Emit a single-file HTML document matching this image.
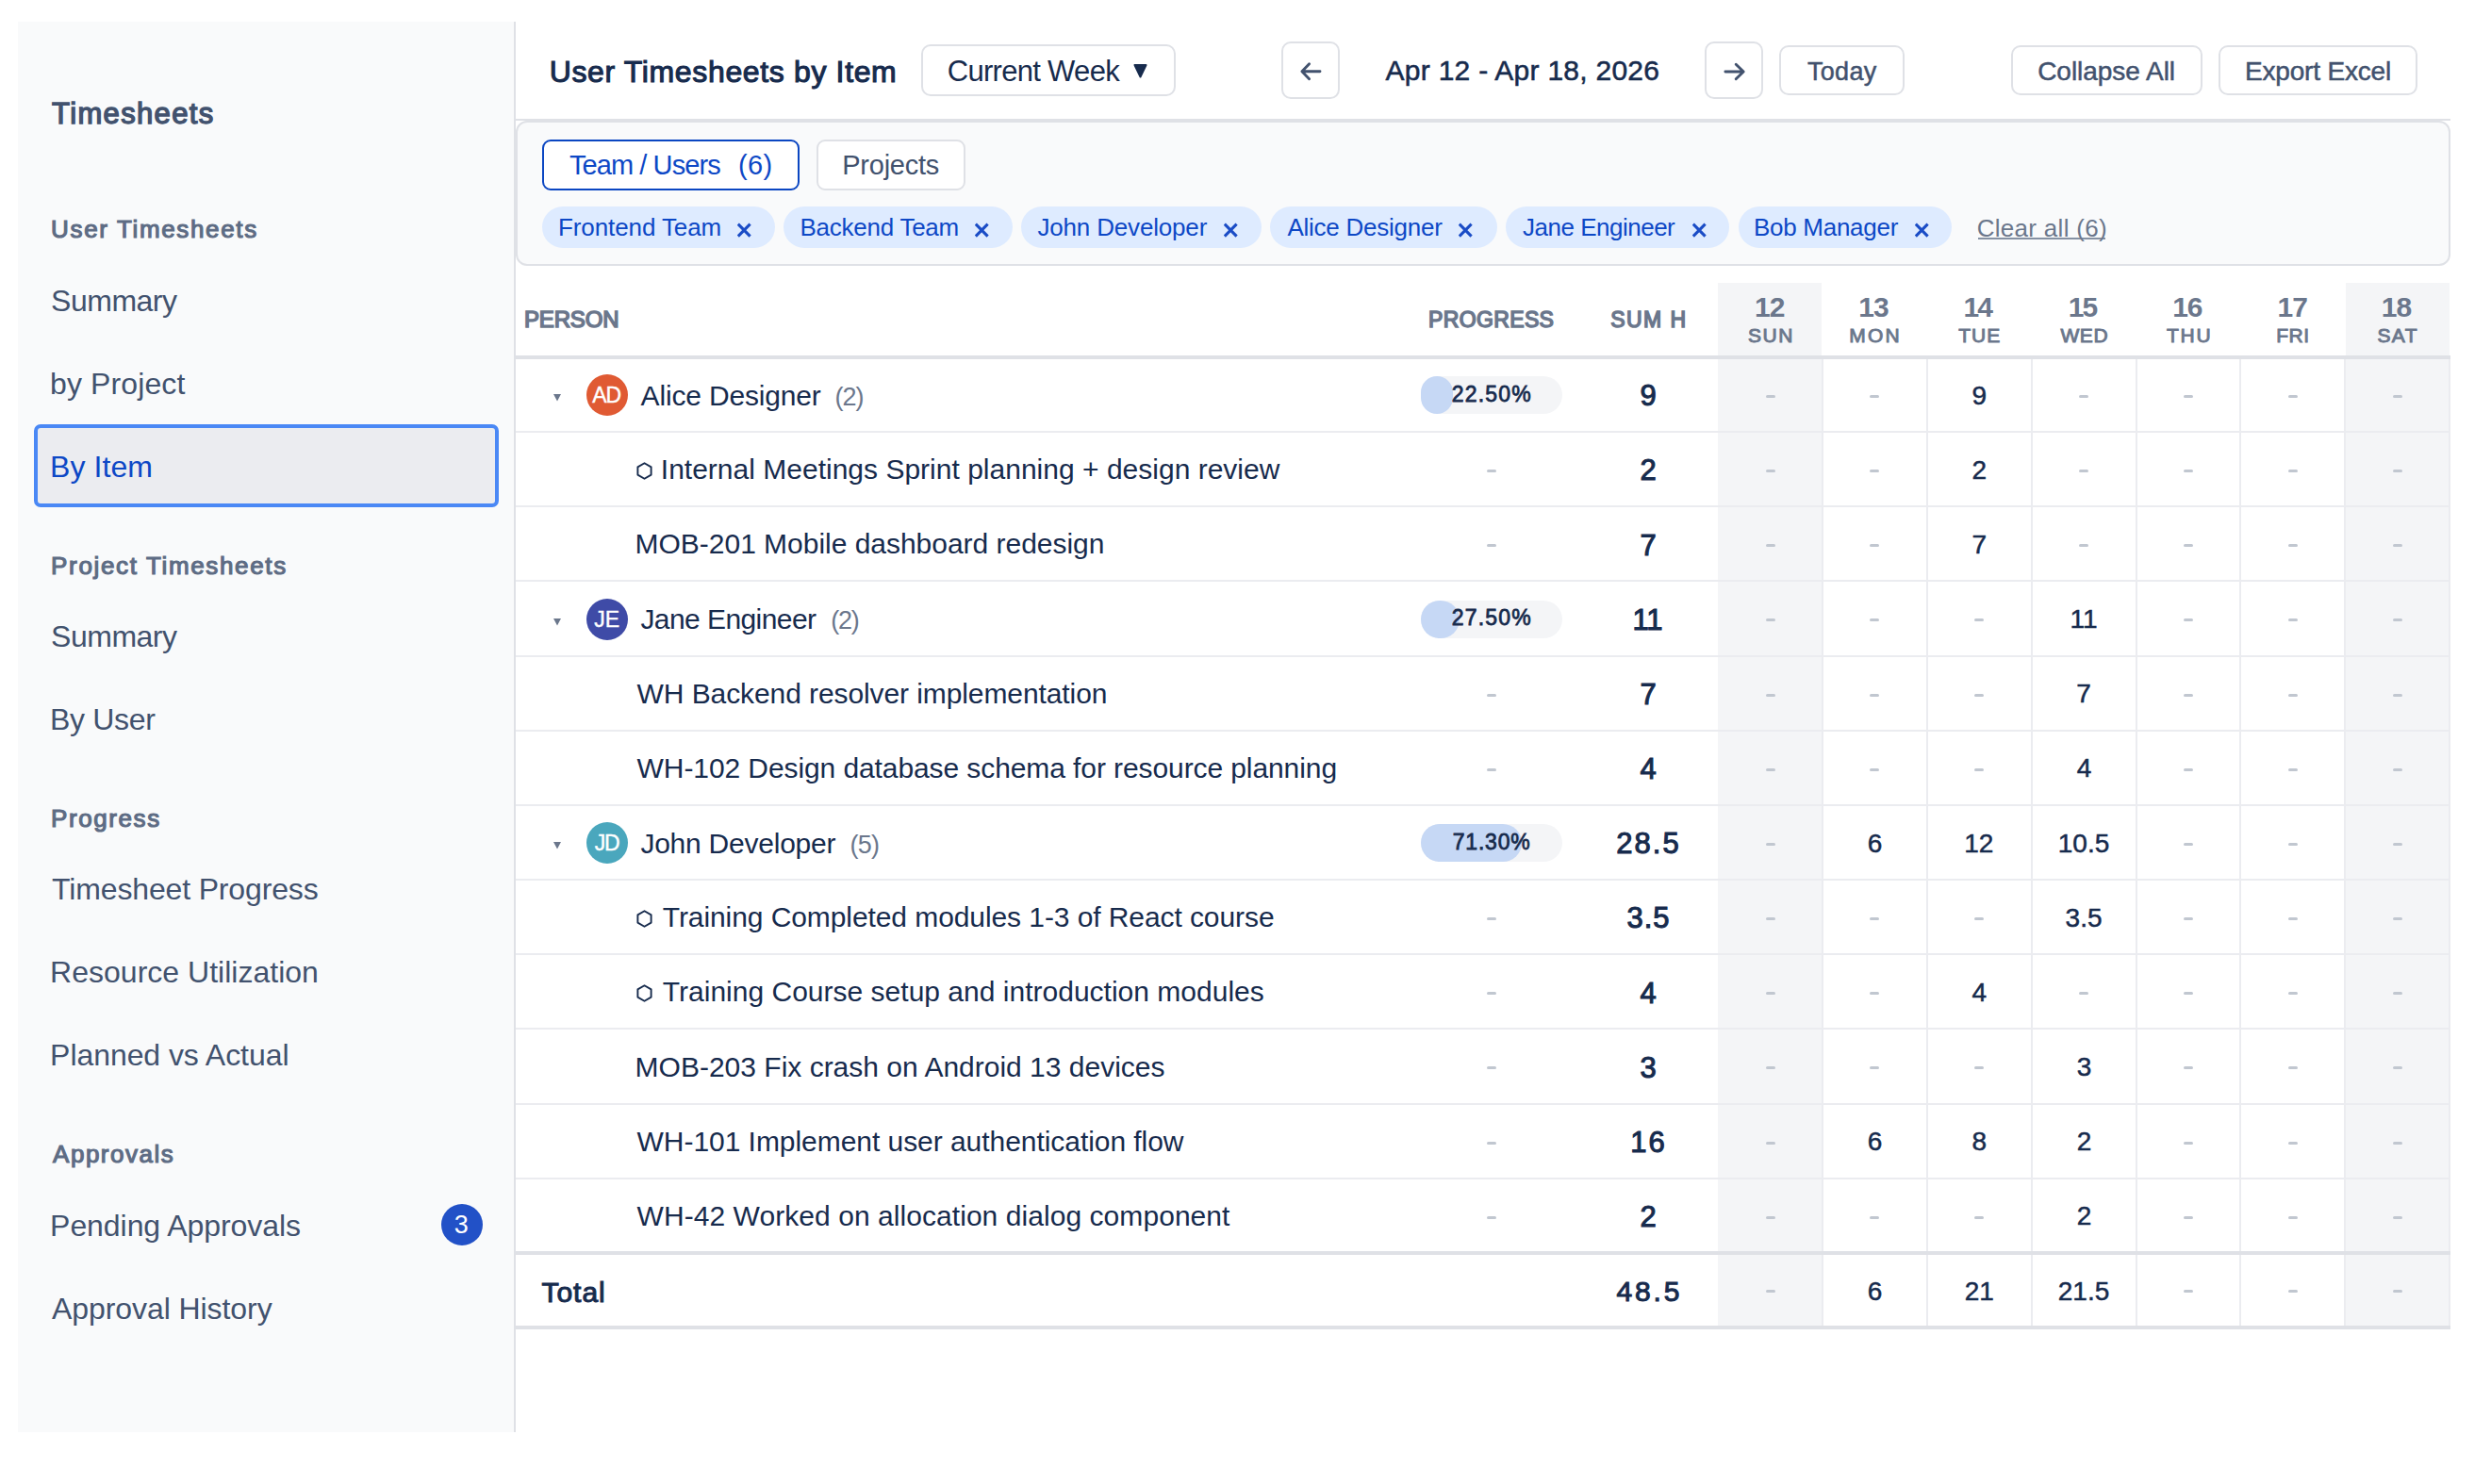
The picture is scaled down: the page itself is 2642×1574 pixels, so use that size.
<!DOCTYPE html><html><head><meta charset="utf-8"><style>html,body{margin:0;padding:0;background:#fff;width:2642px;height:1574px;overflow:hidden;position:relative;font-family:"Liberation Sans",sans-serif}</style></head><body>
<div style="position:absolute;left:19px;top:23px;width:526px;height:1496px;background:#f9fafb"></div>
<div style="position:absolute;left:545px;top:23px;width:2px;height:1496px;background:#dfe1e6"></div>
<div style="position:absolute;left:36px;top:450px;width:493px;height:88px;box-sizing:border-box;border:4px solid #4a88f5;border-radius:7px;background:#ebecf0"></div>
<div style="position:absolute;left:468px;top:1277px;width:44px;height:44px;border-radius:50%;background:#2251c7"></div>
<div style="position:absolute;left:547px;top:126px;width:2052px;height:2px;background:#dfe1e6"></div>
<div style="position:absolute;left:977px;top:47px;width:270px;height:55px;box-sizing:border-box;border:2px solid #dfe1e6;border-radius:10px;background:#fff"></div>
<svg style="position:absolute;left:1202px;top:68px" width="15" height="15" viewBox="0 0 15 15"><path d="M1.5 1 L13.5 1 L7.5 13.5 Z" fill="#172b4d" stroke="#172b4d" stroke-width="2" stroke-linejoin="round"/></svg>
<div style="position:absolute;left:1359px;top:44px;width:62px;height:61px;box-sizing:border-box;border:2px solid #dfe1e6;border-radius:10px;background:#fff"></div>
<svg style="position:absolute;left:1370px;top:55px" width="40" height="40" viewBox="0 0 40 40"><path d="M30 20.8 H11.5 M18.6 12.8 L10.9 20.8 L18.6 28.7" fill="none" stroke="#42526e" stroke-width="2.9" stroke-linecap="round" stroke-linejoin="round"/></svg>
<div style="position:absolute;left:1808px;top:44px;width:62px;height:61px;box-sizing:border-box;border:2px solid #dfe1e6;border-radius:10px;background:#fff"></div>
<svg style="position:absolute;left:1819px;top:55px" width="40" height="40" viewBox="0 0 40 40"><path d="M10.9 21 H29.6 M22.2 13.2 L30.2 21 L22.2 28.8" fill="none" stroke="#42526e" stroke-width="2.9" stroke-linecap="round" stroke-linejoin="round"/></svg>
<div style="position:absolute;left:1887px;top:48px;width:133px;height:53px;box-sizing:border-box;border:2px solid #dfe1e6;border-radius:10px;background:#fff"></div>
<div style="position:absolute;left:2133px;top:48px;width:203px;height:53px;box-sizing:border-box;border:2px solid #dfe1e6;border-radius:10px;background:#fff"></div>
<div style="position:absolute;left:2353px;top:48px;width:211px;height:53px;box-sizing:border-box;border:2px solid #dfe1e6;border-radius:10px;background:#fff"></div>
<div style="position:absolute;left:547px;top:128px;width:2052px;height:154px;box-sizing:border-box;border:2px solid #dfe1e6;border-radius:12px;background:#f9fafb"></div>
<div style="position:absolute;left:575px;top:148px;width:273px;height:54px;box-sizing:border-box;border:2px solid #0b46c2;border-radius:9px;background:#fff"></div>
<div style="position:absolute;left:866px;top:148px;width:158px;height:54px;box-sizing:border-box;border:2px solid #dfe1e6;border-radius:9px;background:#fff"></div>
<div style="position:absolute;left:575px;top:219px;width:247px;height:44px;border-radius:22px;background:#deebff"></div>
<svg style="position:absolute;left:782.2px;top:236px" width="16" height="17" viewBox="0 0 16 17"><path d="M0.8 1.6 L13.6 14.6 M13.6 1.6 L0.8 14.6" stroke="#1a4cc6" stroke-width="3.1" stroke-linecap="butt"/></svg>
<div style="position:absolute;left:831px;top:219px;width:243px;height:44px;border-radius:22px;background:#deebff"></div>
<svg style="position:absolute;left:1033.7px;top:236px" width="16" height="17" viewBox="0 0 16 17"><path d="M0.8 1.6 L13.6 14.6 M13.6 1.6 L0.8 14.6" stroke="#1a4cc6" stroke-width="3.1" stroke-linecap="butt"/></svg>
<div style="position:absolute;left:1083px;top:219px;width:255px;height:44px;border-radius:22px;background:#deebff"></div>
<svg style="position:absolute;left:1297.8px;top:236px" width="16" height="17" viewBox="0 0 16 17"><path d="M0.8 1.6 L13.6 14.6 M13.6 1.6 L0.8 14.6" stroke="#1a4cc6" stroke-width="3.1" stroke-linecap="butt"/></svg>
<div style="position:absolute;left:1347px;top:219px;width:241px;height:44px;border-radius:22px;background:#deebff"></div>
<svg style="position:absolute;left:1547.3px;top:236px" width="16" height="17" viewBox="0 0 16 17"><path d="M0.8 1.6 L13.6 14.6 M13.6 1.6 L0.8 14.6" stroke="#1a4cc6" stroke-width="3.1" stroke-linecap="butt"/></svg>
<div style="position:absolute;left:1597px;top:219px;width:237px;height:44px;border-radius:22px;background:#deebff"></div>
<svg style="position:absolute;left:1794.5px;top:236px" width="16" height="17" viewBox="0 0 16 17"><path d="M0.8 1.6 L13.6 14.6 M13.6 1.6 L0.8 14.6" stroke="#1a4cc6" stroke-width="3.1" stroke-linecap="butt"/></svg>
<div style="position:absolute;left:1844px;top:219px;width:226px;height:44px;border-radius:22px;background:#deebff"></div>
<svg style="position:absolute;left:2031.0px;top:236px" width="16" height="17" viewBox="0 0 16 17"><path d="M0.8 1.6 L13.6 14.6 M13.6 1.6 L0.8 14.6" stroke="#1a4cc6" stroke-width="3.1" stroke-linecap="butt"/></svg>
<div style="position:absolute;left:2098px;top:252px;width:135px;height:2px;background:#8591a3"></div>
<div style="position:absolute;left:1822px;top:300px;width:110px;height:1110px;background:#f4f5f7"></div>
<div style="position:absolute;left:2488px;top:300px;width:110px;height:1110px;background:#f4f5f7"></div>
<div style="position:absolute;left:547px;top:377px;width:2052px;height:4px;background:#dfe1e6"></div>
<div style="position:absolute;left:547px;top:457px;width:2052px;height:2px;background:#ebecf0"></div>
<svg style="position:absolute;left:587px;top:418.0px" width="8" height="8" viewBox="0 0 8 8"><path d="M0 0 H8 L4 7.5 Z" fill="#6b778c"/></svg>
<div style="position:absolute;left:622px;top:397px;width:44px;height:44px;border-radius:50%;background:#e05a33"></div>
<div style="position:absolute;left:1507px;top:399px;width:150px;height:40px;border-radius:20px;background:#f4f5f7;overflow:hidden"></div>
<div style="position:absolute;left:1507px;top:399px;width:34px;height:40px;border-radius:20px;background:#c6d8f5"></div>
<div style="position:absolute;left:1872.5px;top:418.9px;width:10px;height:3px;background:#c1c7d0;border-radius:1.5px"></div>
<div style="position:absolute;left:1983.4px;top:418.9px;width:10px;height:3px;background:#c1c7d0;border-radius:1.5px"></div>
<div style="position:absolute;left:2205.1px;top:418.9px;width:10px;height:3px;background:#c1c7d0;border-radius:1.5px"></div>
<div style="position:absolute;left:2316.0px;top:418.9px;width:10px;height:3px;background:#c1c7d0;border-radius:1.5px"></div>
<div style="position:absolute;left:2426.9px;top:418.9px;width:10px;height:3px;background:#c1c7d0;border-radius:1.5px"></div>
<div style="position:absolute;left:2537.8px;top:418.9px;width:10px;height:3px;background:#c1c7d0;border-radius:1.5px"></div>
<div style="position:absolute;left:547px;top:536px;width:2052px;height:2px;background:#ebecf0"></div>
<svg style="position:absolute;left:675px;top:490.2px" width="18" height="20" viewBox="0 0 18 20"><path d="M8.5 1.3 L15.6 5.4 L15.6 13.6 L8.5 17.7 L1.4 13.6 L1.4 5.4 Z" fill="none" stroke="#172b4d" stroke-width="1.9" stroke-linejoin="round"/></svg>
<div style="position:absolute;left:1577px;top:498.1px;width:10px;height:3px;background:#c1c7d0;border-radius:1.5px"></div>
<div style="position:absolute;left:1872.5px;top:498.1px;width:10px;height:3px;background:#c1c7d0;border-radius:1.5px"></div>
<div style="position:absolute;left:1983.4px;top:498.1px;width:10px;height:3px;background:#c1c7d0;border-radius:1.5px"></div>
<div style="position:absolute;left:2205.1px;top:498.1px;width:10px;height:3px;background:#c1c7d0;border-radius:1.5px"></div>
<div style="position:absolute;left:2316.0px;top:498.1px;width:10px;height:3px;background:#c1c7d0;border-radius:1.5px"></div>
<div style="position:absolute;left:2426.9px;top:498.1px;width:10px;height:3px;background:#c1c7d0;border-radius:1.5px"></div>
<div style="position:absolute;left:2537.8px;top:498.1px;width:10px;height:3px;background:#c1c7d0;border-radius:1.5px"></div>
<div style="position:absolute;left:547px;top:615px;width:2052px;height:2px;background:#ebecf0"></div>
<div style="position:absolute;left:1577px;top:577.2px;width:10px;height:3px;background:#c1c7d0;border-radius:1.5px"></div>
<div style="position:absolute;left:1872.5px;top:577.2px;width:10px;height:3px;background:#c1c7d0;border-radius:1.5px"></div>
<div style="position:absolute;left:1983.4px;top:577.2px;width:10px;height:3px;background:#c1c7d0;border-radius:1.5px"></div>
<div style="position:absolute;left:2205.1px;top:577.2px;width:10px;height:3px;background:#c1c7d0;border-radius:1.5px"></div>
<div style="position:absolute;left:2316.0px;top:577.2px;width:10px;height:3px;background:#c1c7d0;border-radius:1.5px"></div>
<div style="position:absolute;left:2426.9px;top:577.2px;width:10px;height:3px;background:#c1c7d0;border-radius:1.5px"></div>
<div style="position:absolute;left:2537.8px;top:577.2px;width:10px;height:3px;background:#c1c7d0;border-radius:1.5px"></div>
<div style="position:absolute;left:547px;top:695px;width:2052px;height:2px;background:#ebecf0"></div>
<svg style="position:absolute;left:587px;top:655.5px" width="8" height="8" viewBox="0 0 8 8"><path d="M0 0 H8 L4 7.5 Z" fill="#6b778c"/></svg>
<div style="position:absolute;left:622px;top:635px;width:44px;height:44px;border-radius:50%;background:#3f4ba7"></div>
<div style="position:absolute;left:1507px;top:637px;width:150px;height:40px;border-radius:20px;background:#f4f5f7;overflow:hidden"></div>
<div style="position:absolute;left:1507px;top:637px;width:41px;height:40px;border-radius:20px;background:#c6d8f5"></div>
<div style="position:absolute;left:1872.5px;top:656.4px;width:10px;height:3px;background:#c1c7d0;border-radius:1.5px"></div>
<div style="position:absolute;left:1983.4px;top:656.4px;width:10px;height:3px;background:#c1c7d0;border-radius:1.5px"></div>
<div style="position:absolute;left:2094.2px;top:656.4px;width:10px;height:3px;background:#c1c7d0;border-radius:1.5px"></div>
<div style="position:absolute;left:2316.0px;top:656.4px;width:10px;height:3px;background:#c1c7d0;border-radius:1.5px"></div>
<div style="position:absolute;left:2426.9px;top:656.4px;width:10px;height:3px;background:#c1c7d0;border-radius:1.5px"></div>
<div style="position:absolute;left:2537.8px;top:656.4px;width:10px;height:3px;background:#c1c7d0;border-radius:1.5px"></div>
<div style="position:absolute;left:547px;top:774px;width:2052px;height:2px;background:#ebecf0"></div>
<div style="position:absolute;left:1577px;top:735.6px;width:10px;height:3px;background:#c1c7d0;border-radius:1.5px"></div>
<div style="position:absolute;left:1872.5px;top:735.6px;width:10px;height:3px;background:#c1c7d0;border-radius:1.5px"></div>
<div style="position:absolute;left:1983.4px;top:735.6px;width:10px;height:3px;background:#c1c7d0;border-radius:1.5px"></div>
<div style="position:absolute;left:2094.2px;top:735.6px;width:10px;height:3px;background:#c1c7d0;border-radius:1.5px"></div>
<div style="position:absolute;left:2316.0px;top:735.6px;width:10px;height:3px;background:#c1c7d0;border-radius:1.5px"></div>
<div style="position:absolute;left:2426.9px;top:735.6px;width:10px;height:3px;background:#c1c7d0;border-radius:1.5px"></div>
<div style="position:absolute;left:2537.8px;top:735.6px;width:10px;height:3px;background:#c1c7d0;border-radius:1.5px"></div>
<div style="position:absolute;left:547px;top:853px;width:2052px;height:2px;background:#ebecf0"></div>
<div style="position:absolute;left:1577px;top:814.8px;width:10px;height:3px;background:#c1c7d0;border-radius:1.5px"></div>
<div style="position:absolute;left:1872.5px;top:814.8px;width:10px;height:3px;background:#c1c7d0;border-radius:1.5px"></div>
<div style="position:absolute;left:1983.4px;top:814.8px;width:10px;height:3px;background:#c1c7d0;border-radius:1.5px"></div>
<div style="position:absolute;left:2094.2px;top:814.8px;width:10px;height:3px;background:#c1c7d0;border-radius:1.5px"></div>
<div style="position:absolute;left:2316.0px;top:814.8px;width:10px;height:3px;background:#c1c7d0;border-radius:1.5px"></div>
<div style="position:absolute;left:2426.9px;top:814.8px;width:10px;height:3px;background:#c1c7d0;border-radius:1.5px"></div>
<div style="position:absolute;left:2537.8px;top:814.8px;width:10px;height:3px;background:#c1c7d0;border-radius:1.5px"></div>
<div style="position:absolute;left:547px;top:932px;width:2052px;height:2px;background:#ebecf0"></div>
<svg style="position:absolute;left:587px;top:893.0px" width="8" height="8" viewBox="0 0 8 8"><path d="M0 0 H8 L4 7.5 Z" fill="#6b778c"/></svg>
<div style="position:absolute;left:622px;top:872px;width:44px;height:44px;border-radius:50%;background:#4aa7bd"></div>
<div style="position:absolute;left:1507px;top:874px;width:150px;height:40px;border-radius:20px;background:#f4f5f7;overflow:hidden"></div>
<div style="position:absolute;left:1507px;top:874px;width:107px;height:40px;border-radius:20px;background:#c6d8f5"></div>
<div style="position:absolute;left:1872.5px;top:893.9px;width:10px;height:3px;background:#c1c7d0;border-radius:1.5px"></div>
<div style="position:absolute;left:2316.0px;top:893.9px;width:10px;height:3px;background:#c1c7d0;border-radius:1.5px"></div>
<div style="position:absolute;left:2426.9px;top:893.9px;width:10px;height:3px;background:#c1c7d0;border-radius:1.5px"></div>
<div style="position:absolute;left:2537.8px;top:893.9px;width:10px;height:3px;background:#c1c7d0;border-radius:1.5px"></div>
<div style="position:absolute;left:547px;top:1011px;width:2052px;height:2px;background:#ebecf0"></div>
<svg style="position:absolute;left:675px;top:965.2px" width="18" height="20" viewBox="0 0 18 20"><path d="M8.5 1.3 L15.6 5.4 L15.6 13.6 L8.5 17.7 L1.4 13.6 L1.4 5.4 Z" fill="none" stroke="#172b4d" stroke-width="1.9" stroke-linejoin="round"/></svg>
<div style="position:absolute;left:1577px;top:973.1px;width:10px;height:3px;background:#c1c7d0;border-radius:1.5px"></div>
<div style="position:absolute;left:1872.5px;top:973.1px;width:10px;height:3px;background:#c1c7d0;border-radius:1.5px"></div>
<div style="position:absolute;left:1983.4px;top:973.1px;width:10px;height:3px;background:#c1c7d0;border-radius:1.5px"></div>
<div style="position:absolute;left:2094.2px;top:973.1px;width:10px;height:3px;background:#c1c7d0;border-radius:1.5px"></div>
<div style="position:absolute;left:2316.0px;top:973.1px;width:10px;height:3px;background:#c1c7d0;border-radius:1.5px"></div>
<div style="position:absolute;left:2426.9px;top:973.1px;width:10px;height:3px;background:#c1c7d0;border-radius:1.5px"></div>
<div style="position:absolute;left:2537.8px;top:973.1px;width:10px;height:3px;background:#c1c7d0;border-radius:1.5px"></div>
<div style="position:absolute;left:547px;top:1090px;width:2052px;height:2px;background:#ebecf0"></div>
<svg style="position:absolute;left:675px;top:1044.4px" width="18" height="20" viewBox="0 0 18 20"><path d="M8.5 1.3 L15.6 5.4 L15.6 13.6 L8.5 17.7 L1.4 13.6 L1.4 5.4 Z" fill="none" stroke="#172b4d" stroke-width="1.9" stroke-linejoin="round"/></svg>
<div style="position:absolute;left:1577px;top:1052.3px;width:10px;height:3px;background:#c1c7d0;border-radius:1.5px"></div>
<div style="position:absolute;left:1872.5px;top:1052.3px;width:10px;height:3px;background:#c1c7d0;border-radius:1.5px"></div>
<div style="position:absolute;left:1983.4px;top:1052.3px;width:10px;height:3px;background:#c1c7d0;border-radius:1.5px"></div>
<div style="position:absolute;left:2205.1px;top:1052.3px;width:10px;height:3px;background:#c1c7d0;border-radius:1.5px"></div>
<div style="position:absolute;left:2316.0px;top:1052.3px;width:10px;height:3px;background:#c1c7d0;border-radius:1.5px"></div>
<div style="position:absolute;left:2426.9px;top:1052.3px;width:10px;height:3px;background:#c1c7d0;border-radius:1.5px"></div>
<div style="position:absolute;left:2537.8px;top:1052.3px;width:10px;height:3px;background:#c1c7d0;border-radius:1.5px"></div>
<div style="position:absolute;left:547px;top:1170px;width:2052px;height:2px;background:#ebecf0"></div>
<div style="position:absolute;left:1577px;top:1131.4px;width:10px;height:3px;background:#c1c7d0;border-radius:1.5px"></div>
<div style="position:absolute;left:1872.5px;top:1131.4px;width:10px;height:3px;background:#c1c7d0;border-radius:1.5px"></div>
<div style="position:absolute;left:1983.4px;top:1131.4px;width:10px;height:3px;background:#c1c7d0;border-radius:1.5px"></div>
<div style="position:absolute;left:2094.2px;top:1131.4px;width:10px;height:3px;background:#c1c7d0;border-radius:1.5px"></div>
<div style="position:absolute;left:2316.0px;top:1131.4px;width:10px;height:3px;background:#c1c7d0;border-radius:1.5px"></div>
<div style="position:absolute;left:2426.9px;top:1131.4px;width:10px;height:3px;background:#c1c7d0;border-radius:1.5px"></div>
<div style="position:absolute;left:2537.8px;top:1131.4px;width:10px;height:3px;background:#c1c7d0;border-radius:1.5px"></div>
<div style="position:absolute;left:547px;top:1249px;width:2052px;height:2px;background:#ebecf0"></div>
<div style="position:absolute;left:1577px;top:1210.6px;width:10px;height:3px;background:#c1c7d0;border-radius:1.5px"></div>
<div style="position:absolute;left:1872.5px;top:1210.6px;width:10px;height:3px;background:#c1c7d0;border-radius:1.5px"></div>
<div style="position:absolute;left:2316.0px;top:1210.6px;width:10px;height:3px;background:#c1c7d0;border-radius:1.5px"></div>
<div style="position:absolute;left:2426.9px;top:1210.6px;width:10px;height:3px;background:#c1c7d0;border-radius:1.5px"></div>
<div style="position:absolute;left:2537.8px;top:1210.6px;width:10px;height:3px;background:#c1c7d0;border-radius:1.5px"></div>
<div style="position:absolute;left:1577px;top:1289.8px;width:10px;height:3px;background:#c1c7d0;border-radius:1.5px"></div>
<div style="position:absolute;left:1872.5px;top:1289.8px;width:10px;height:3px;background:#c1c7d0;border-radius:1.5px"></div>
<div style="position:absolute;left:1983.4px;top:1289.8px;width:10px;height:3px;background:#c1c7d0;border-radius:1.5px"></div>
<div style="position:absolute;left:2094.2px;top:1289.8px;width:10px;height:3px;background:#c1c7d0;border-radius:1.5px"></div>
<div style="position:absolute;left:2316.0px;top:1289.8px;width:10px;height:3px;background:#c1c7d0;border-radius:1.5px"></div>
<div style="position:absolute;left:2426.9px;top:1289.8px;width:10px;height:3px;background:#c1c7d0;border-radius:1.5px"></div>
<div style="position:absolute;left:2537.8px;top:1289.8px;width:10px;height:3px;background:#c1c7d0;border-radius:1.5px"></div>
<div style="position:absolute;left:1932px;top:381px;width:2px;height:1025px;background:#ebecf0"></div>
<div style="position:absolute;left:2043px;top:381px;width:2px;height:1025px;background:#ebecf0"></div>
<div style="position:absolute;left:2154px;top:381px;width:2px;height:1025px;background:#ebecf0"></div>
<div style="position:absolute;left:2265px;top:381px;width:2px;height:1025px;background:#ebecf0"></div>
<div style="position:absolute;left:2375px;top:381px;width:2px;height:1025px;background:#ebecf0"></div>
<div style="position:absolute;left:2486px;top:381px;width:2px;height:1025px;background:#ebecf0"></div>
<div style="position:absolute;left:2597px;top:381px;width:2px;height:1025px;background:#ebecf0"></div>
<div style="position:absolute;left:547px;top:1327px;width:2052px;height:4px;background:#dfe1e6"></div>
<div style="position:absolute;left:547px;top:1406px;width:2052px;height:4px;background:#dfe1e6"></div>
<div style="position:absolute;left:1872.5px;top:1368.3px;width:10px;height:3px;background:#c1c7d0;border-radius:1.5px"></div>
<div style="position:absolute;left:2316.0px;top:1368.3px;width:10px;height:3px;background:#c1c7d0;border-radius:1.5px"></div>
<div style="position:absolute;left:2426.9px;top:1368.3px;width:10px;height:3px;background:#c1c7d0;border-radius:1.5px"></div>
<div style="position:absolute;left:2537.8px;top:1368.3px;width:10px;height:3px;background:#c1c7d0;border-radius:1.5px"></div>
<div id="sb_title" style="position:absolute;left:55.10px;top:105px;font:normal 31px/31px 'Liberation Sans';letter-spacing:1.333px;color:#42526e;-webkit-text-stroke:1.40px #42526e;white-space:pre">Timesheets</div>
<div id="sb0" style="position:absolute;left:54.10px;top:230px;font:normal 26px/26px 'Liberation Sans';letter-spacing:1.643px;color:#5e6c84;-webkit-text-stroke:1.17px #5e6c84;white-space:pre">User Timesheets</div>
<div id="sb1" style="position:absolute;left:54.10px;top:303px;font:normal 32px/32px 'Liberation Sans';letter-spacing:-0.500px;color:#42526e;white-space:pre">Summary</div>
<div id="sb2" style="position:absolute;left:53.10px;top:391px;font:normal 32px/32px 'Liberation Sans';letter-spacing:0.111px;color:#42526e;white-space:pre">by Project</div>
<div id="sb3" style="position:absolute;left:53.10px;top:479px;font:normal 32px/32px 'Liberation Sans';letter-spacing:0.067px;color:#0d48c6;white-space:pre">By Item</div>
<div id="sb4" style="position:absolute;left:54.10px;top:587px;font:normal 26px/26px 'Liberation Sans';letter-spacing:1.647px;color:#5e6c84;-webkit-text-stroke:1.17px #5e6c84;white-space:pre">Project Timesheets</div>
<div id="sb5" style="position:absolute;left:54.10px;top:659px;font:normal 32px/32px 'Liberation Sans';letter-spacing:-0.500px;color:#42526e;white-space:pre">Summary</div>
<div id="sb6" style="position:absolute;left:53.10px;top:747px;font:normal 32px/32px 'Liberation Sans';letter-spacing:-0.333px;color:#42526e;white-space:pre">By User</div>
<div id="sb7" style="position:absolute;left:54.10px;top:855px;font:normal 26px/26px 'Liberation Sans';letter-spacing:1.571px;color:#5e6c84;-webkit-text-stroke:1.17px #5e6c84;white-space:pre">Progress</div>
<div id="sb8" style="position:absolute;left:55.10px;top:927px;font:normal 32px/32px 'Liberation Sans';letter-spacing:-0.153px;color:#42526e;white-space:pre">Timesheet Progress</div>
<div id="sb9" style="position:absolute;left:53.10px;top:1015px;font:normal 32px/32px 'Liberation Sans';letter-spacing:0.011px;color:#42526e;white-space:pre">Resource Utilization</div>
<div id="sb10" style="position:absolute;left:53.10px;top:1103px;font:normal 32px/32px 'Liberation Sans';letter-spacing:-0.062px;color:#42526e;white-space:pre">Planned vs Actual</div>
<div id="sb11" style="position:absolute;left:56.10px;top:1211px;font:normal 26px/26px 'Liberation Sans';letter-spacing:1.500px;color:#5e6c84;-webkit-text-stroke:1.17px #5e6c84;white-space:pre">Approvals</div>
<div id="sb12" style="position:absolute;left:53.10px;top:1284px;font:normal 32px/32px 'Liberation Sans';letter-spacing:-0.062px;color:#42526e;white-space:pre">Pending Approvals</div>
<div id="sb13" style="position:absolute;left:55.10px;top:1372px;font:normal 32px/32px 'Liberation Sans';letter-spacing:-0.080px;color:#42526e;white-space:pre">Approval History</div>
<div id="badge" style="position:absolute;left:189.20px;top:1286px;width:600px;text-align:center;font:normal 27px/27px 'Liberation Sans';letter-spacing:0.000px;color:#ffffff;white-space:pre"><span style="margin-right:-0.000px">3</span></div>
<div id="title" style="position:absolute;left:582.70px;top:60px;font:normal 32px/32px 'Liberation Sans';letter-spacing:0.645px;color:#172b4d;-webkit-text-stroke:1.09px #172b4d;white-space:pre">User Timesheets by Item</div>
<div id="cw" style="position:absolute;left:1004.80px;top:60px;font:normal 31px/31px 'Liberation Sans';letter-spacing:-0.709px;color:#172b4d;white-space:pre">Current Week</div>
<div id="date" style="position:absolute;left:1469.60px;top:60px;font:normal 30px/30px 'Liberation Sans';letter-spacing:0.260px;color:#172b4d;-webkit-text-stroke:0.54px #172b4d;white-space:pre">Apr 12 - Apr 18, 2026</div>
<div id="today" style="position:absolute;left:1917.00px;top:63px;font:normal 27px/27px 'Liberation Sans';letter-spacing:0.300px;color:#42526e;-webkit-text-stroke:0.49px #42526e;white-space:pre">Today</div>
<div id="collapse" style="position:absolute;left:2161.20px;top:62px;font:normal 28px/28px 'Liberation Sans';letter-spacing:-0.036px;color:#42526e;-webkit-text-stroke:0.50px #42526e;white-space:pre">Collapse All</div>
<div id="export" style="position:absolute;left:2381.00px;top:62px;font:normal 28px/28px 'Liberation Sans';letter-spacing:-0.182px;color:#42526e;-webkit-text-stroke:0.50px #42526e;white-space:pre">Export Excel</div>
<div id="tab1" style="position:absolute;left:603.90px;top:161px;font:normal 29px/29px 'Liberation Sans';letter-spacing:-0.909px;color:#0d48c6;white-space:pre">Team / Users</div>
<div id="tab1b" style="position:absolute;left:783.00px;top:161px;font:normal 29px/29px 'Liberation Sans';letter-spacing:0.400px;color:#0d48c6;white-space:pre">(6)</div>
<div id="tab2" style="position:absolute;left:893.20px;top:161px;font:normal 29px/29px 'Liberation Sans';letter-spacing:-0.229px;color:#42526e;white-space:pre">Projects</div>
<div id="chip0" style="position:absolute;left:592.00px;top:228px;font:normal 26px/26px 'Liberation Sans';letter-spacing:-0.100px;color:#0d48c6;white-space:pre">Frontend Team</div>
<div id="chip1" style="position:absolute;left:848.50px;top:228px;font:normal 26px/26px 'Liberation Sans';letter-spacing:-0.255px;color:#0d48c6;white-space:pre">Backend Team</div>
<div id="chip2" style="position:absolute;left:1100.40px;top:228px;font:normal 26px/26px 'Liberation Sans';letter-spacing:-0.169px;color:#0d48c6;white-space:pre">John Developer</div>
<div id="chip3" style="position:absolute;left:1365.40px;top:228px;font:normal 26px/26px 'Liberation Sans';letter-spacing:-0.246px;color:#0d48c6;white-space:pre">Alice Designer</div>
<div id="chip4" style="position:absolute;left:1615.10px;top:228px;font:normal 26px/26px 'Liberation Sans';letter-spacing:-0.500px;color:#0d48c6;white-space:pre">Jane Engineer</div>
<div id="chip5" style="position:absolute;left:1860.00px;top:228px;font:normal 26px/26px 'Liberation Sans';letter-spacing:-0.280px;color:#0d48c6;white-space:pre">Bob Manager</div>
<div id="clear" style="position:absolute;left:2096.70px;top:229px;font:normal 26px/26px 'Liberation Sans';letter-spacing:0.300px;color:#6b778c;white-space:pre">Clear all (6)</div>
<div id="h_person" style="position:absolute;left:556.00px;top:327px;font:normal 24px/24px 'Liberation Sans';letter-spacing:-0.160px;color:#6b778c;-webkit-text-stroke:1.56px #6b778c;white-space:pre">PERSON</div>
<div id="h_prog" style="position:absolute;left:1281.50px;top:328px;width:600px;text-align:center;font:normal 23px/23px 'Liberation Sans';letter-spacing:0.371px;color:#6b778c;-webkit-text-stroke:1.50px #6b778c;white-space:pre"><span style="margin-right:-0.371px">PROGRESS</span></div>
<div id="h_sum" style="position:absolute;left:1448.10px;top:328px;width:600px;text-align:center;font:normal 23px/23px 'Liberation Sans';letter-spacing:1.450px;color:#6b778c;-webkit-text-stroke:1.50px #6b778c;white-space:pre"><span style="margin-right:-1.450px">SUM H</span></div>
<div id="hd0" style="position:absolute;left:1577.15px;top:311px;width:600px;text-align:center;font:bold 30px/30px 'Liberation Sans';letter-spacing:-1.000px;color:#6b778c;white-space:pre"><span style="margin-right:1.000px">12</span></div>
<div id="hn0" style="position:absolute;left:1577.65px;top:345px;width:600px;text-align:center;font:normal 21px/21px 'Liberation Sans';letter-spacing:1.500px;color:#6b778c;-webkit-text-stroke:0.94px #6b778c;white-space:pre"><span style="margin-right:-1.500px">SUN</span></div>
<div id="hd1" style="position:absolute;left:1687.45px;top:311px;width:600px;text-align:center;font:bold 30px/30px 'Liberation Sans';letter-spacing:-1.000px;color:#6b778c;white-space:pre"><span style="margin-right:1.000px">13</span></div>
<div id="hn1" style="position:absolute;left:1687.95px;top:345px;width:600px;text-align:center;font:normal 21px/21px 'Liberation Sans';letter-spacing:2.300px;color:#6b778c;-webkit-text-stroke:0.94px #6b778c;white-space:pre"><span style="margin-right:-2.300px">MON</span></div>
<div id="hd2" style="position:absolute;left:1798.25px;top:311px;width:600px;text-align:center;font:bold 30px/30px 'Liberation Sans';letter-spacing:-2.000px;color:#6b778c;white-space:pre"><span style="margin-right:2.000px">14</span></div>
<div id="hn2" style="position:absolute;left:1799.25px;top:345px;width:600px;text-align:center;font:normal 21px/21px 'Liberation Sans';letter-spacing:0.950px;color:#6b778c;-webkit-text-stroke:0.94px #6b778c;white-space:pre"><span style="margin-right:-0.950px">TUE</span></div>
<div id="hd3" style="position:absolute;left:1909.55px;top:311px;width:600px;text-align:center;font:bold 30px/30px 'Liberation Sans';letter-spacing:-2.000px;color:#6b778c;white-space:pre"><span style="margin-right:2.000px">15</span></div>
<div id="hn3" style="position:absolute;left:1910.55px;top:345px;width:600px;text-align:center;font:normal 21px/21px 'Liberation Sans';letter-spacing:0.600px;color:#6b778c;-webkit-text-stroke:0.94px #6b778c;white-space:pre"><span style="margin-right:-0.600px">WED</span></div>
<div id="hd4" style="position:absolute;left:2020.35px;top:311px;width:600px;text-align:center;font:bold 30px/30px 'Liberation Sans';letter-spacing:-1.000px;color:#6b778c;white-space:pre"><span style="margin-right:1.000px">16</span></div>
<div id="hn4" style="position:absolute;left:2021.35px;top:345px;width:600px;text-align:center;font:normal 21px/21px 'Liberation Sans';letter-spacing:1.650px;color:#6b778c;-webkit-text-stroke:0.94px #6b778c;white-space:pre"><span style="margin-right:-1.650px">THU</span></div>
<div id="hd5" style="position:absolute;left:2131.65px;top:311px;width:600px;text-align:center;font:bold 30px/30px 'Liberation Sans';letter-spacing:-1.000px;color:#6b778c;white-space:pre"><span style="margin-right:1.000px">17</span></div>
<div id="hn5" style="position:absolute;left:2131.65px;top:345px;width:600px;text-align:center;font:normal 21px/21px 'Liberation Sans';letter-spacing:0.450px;color:#6b778c;-webkit-text-stroke:0.94px #6b778c;white-space:pre"><span style="margin-right:-0.450px">FRI</span></div>
<div id="hd6" style="position:absolute;left:2241.95px;top:311px;width:600px;text-align:center;font:bold 30px/30px 'Liberation Sans';letter-spacing:-1.000px;color:#6b778c;white-space:pre"><span style="margin-right:1.000px">18</span></div>
<div id="hn6" style="position:absolute;left:2242.45px;top:345px;width:600px;text-align:center;font:normal 21px/21px 'Liberation Sans';letter-spacing:1.400px;color:#6b778c;-webkit-text-stroke:0.94px #6b778c;white-space:pre"><span style="margin-right:-1.400px">SAT</span></div>
<div id="ini0" style="position:absolute;left:343.70px;top:408px;width:600px;text-align:center;font:normal 23px/23px 'Liberation Sans';letter-spacing:-1.000px;color:#ffffff;-webkit-text-stroke:0.41px #ffffff;white-space:pre"><span style="margin-right:1.000px">AD</span></div>
<div id="name0" style="position:absolute;left:679.60px;top:405px;font:normal 30px/30px 'Liberation Sans';letter-spacing:-0.169px;color:#172b4d;white-space:pre">Alice Designer</div>
<div id="cnt0" style="position:absolute;left:885.40px;top:408px;font:normal 27px/27px 'Liberation Sans';letter-spacing:-1.000px;color:#6b778c;white-space:pre">(2)</div>
<div id="pct0" style="position:absolute;left:1281.75px;top:407px;width:600px;text-align:center;font:normal 23px/23px 'Liberation Sans';letter-spacing:1.200px;color:#172b4d;-webkit-text-stroke:0.78px #172b4d;white-space:pre"><span style="margin-right:-1.200px">22.50%</span></div>
<div id="sum0" style="position:absolute;left:1448.00px;top:404px;width:600px;text-align:center;font:normal 31px/31px 'Liberation Sans';letter-spacing:0.000px;color:#172b4d;-webkit-text-stroke:1.05px #172b4d;white-space:pre"><span style="margin-right:-0.000px">9</span></div>
<div id="d0_2" style="position:absolute;left:1799.25px;top:406px;width:600px;text-align:center;font:normal 28px/28px 'Liberation Sans';letter-spacing:0.000px;color:#172b4d;-webkit-text-stroke:0.50px #172b4d;white-space:pre"><span style="margin-right:-0.000px">9</span></div>
<div id="item1" style="position:absolute;left:700.80px;top:483px;font:normal 30px/30px 'Liberation Sans';letter-spacing:0.008px;color:#172b4d;white-space:pre">Internal Meetings Sprint planning + design review</div>
<div id="sum1" style="position:absolute;left:1448.00px;top:483px;width:600px;text-align:center;font:normal 31px/31px 'Liberation Sans';letter-spacing:0.000px;color:#172b4d;-webkit-text-stroke:1.05px #172b4d;white-space:pre"><span style="margin-right:-0.000px">2</span></div>
<div id="d1_2" style="position:absolute;left:1799.25px;top:485px;width:600px;text-align:center;font:normal 28px/28px 'Liberation Sans';letter-spacing:0.000px;color:#172b4d;-webkit-text-stroke:0.50px #172b4d;white-space:pre"><span style="margin-right:-0.000px">2</span></div>
<div id="item2" style="position:absolute;left:673.60px;top:562px;font:normal 30px/30px 'Liberation Sans';letter-spacing:-0.025px;color:#172b4d;white-space:pre">MOB-201 Mobile dashboard redesign</div>
<div id="sum2" style="position:absolute;left:1448.00px;top:563px;width:600px;text-align:center;font:normal 31px/31px 'Liberation Sans';letter-spacing:0.000px;color:#172b4d;-webkit-text-stroke:1.05px #172b4d;white-space:pre"><span style="margin-right:-0.000px">7</span></div>
<div id="d2_2" style="position:absolute;left:1799.25px;top:564px;width:600px;text-align:center;font:normal 28px/28px 'Liberation Sans';letter-spacing:0.000px;color:#172b4d;-webkit-text-stroke:0.50px #172b4d;white-space:pre"><span style="margin-right:-0.000px">7</span></div>
<div id="ini3" style="position:absolute;left:343.70px;top:646px;width:600px;text-align:center;font:normal 23px/23px 'Liberation Sans';letter-spacing:0.000px;color:#ffffff;-webkit-text-stroke:0.41px #ffffff;white-space:pre"><span style="margin-right:-0.000px">JE</span></div>
<div id="name3" style="position:absolute;left:679.40px;top:642px;font:normal 30px/30px 'Liberation Sans';letter-spacing:-0.567px;color:#172b4d;white-space:pre">Jane Engineer</div>
<div id="cnt3" style="position:absolute;left:881.20px;top:645px;font:normal 27px/27px 'Liberation Sans';letter-spacing:-1.200px;color:#6b778c;white-space:pre">(2)</div>
<div id="pct3" style="position:absolute;left:1281.75px;top:644px;width:600px;text-align:center;font:normal 23px/23px 'Liberation Sans';letter-spacing:1.200px;color:#172b4d;-webkit-text-stroke:0.78px #172b4d;white-space:pre"><span style="margin-right:-1.200px">27.50%</span></div>
<div id="sum3" style="position:absolute;left:1447.50px;top:642px;width:600px;text-align:center;font:normal 31px/31px 'Liberation Sans';letter-spacing:0.000px;color:#172b4d;-webkit-text-stroke:1.05px #172b4d;white-space:pre"><span style="margin-right:-0.000px">11</span></div>
<div id="d3_3" style="position:absolute;left:1910.05px;top:643px;width:600px;text-align:center;font:normal 28px/28px 'Liberation Sans';letter-spacing:0.000px;color:#172b4d;-webkit-text-stroke:0.50px #172b4d;white-space:pre"><span style="margin-right:-0.000px">11</span></div>
<div id="item4" style="position:absolute;left:675.60px;top:721px;font:normal 30px/30px 'Liberation Sans';letter-spacing:-0.091px;color:#172b4d;white-space:pre">WH Backend resolver implementation</div>
<div id="sum4" style="position:absolute;left:1448.00px;top:721px;width:600px;text-align:center;font:normal 31px/31px 'Liberation Sans';letter-spacing:0.000px;color:#172b4d;-webkit-text-stroke:1.05px #172b4d;white-space:pre"><span style="margin-right:-0.000px">7</span></div>
<div id="d4_3" style="position:absolute;left:1910.05px;top:722px;width:600px;text-align:center;font:normal 28px/28px 'Liberation Sans';letter-spacing:0.000px;color:#172b4d;-webkit-text-stroke:0.50px #172b4d;white-space:pre"><span style="margin-right:-0.000px">7</span></div>
<div id="item5" style="position:absolute;left:675.60px;top:800px;font:normal 30px/30px 'Liberation Sans';letter-spacing:-0.092px;color:#172b4d;white-space:pre">WH-102 Design database schema for resource planning</div>
<div id="sum5" style="position:absolute;left:1448.00px;top:800px;width:600px;text-align:center;font:normal 31px/31px 'Liberation Sans';letter-spacing:0.000px;color:#172b4d;-webkit-text-stroke:1.05px #172b4d;white-space:pre"><span style="margin-right:-0.000px">4</span></div>
<div id="d5_3" style="position:absolute;left:1910.55px;top:801px;width:600px;text-align:center;font:normal 28px/28px 'Liberation Sans';letter-spacing:0.000px;color:#172b4d;-webkit-text-stroke:0.50px #172b4d;white-space:pre"><span style="margin-right:-0.000px">4</span></div>
<div id="ini6" style="position:absolute;left:344.20px;top:883px;width:600px;text-align:center;font:normal 23px/23px 'Liberation Sans';letter-spacing:-1.400px;color:#ffffff;-webkit-text-stroke:0.41px #ffffff;white-space:pre"><span style="margin-right:1.400px">JD</span></div>
<div id="name6" style="position:absolute;left:679.40px;top:880px;font:normal 30px/30px 'Liberation Sans';letter-spacing:-0.231px;color:#172b4d;white-space:pre">John Developer</div>
<div id="cnt6" style="position:absolute;left:901.60px;top:883px;font:normal 27px/27px 'Liberation Sans';letter-spacing:-0.800px;color:#6b778c;white-space:pre">(5)</div>
<div id="pct6" style="position:absolute;left:1281.75px;top:882px;width:600px;text-align:center;font:normal 23px/23px 'Liberation Sans';letter-spacing:0.800px;color:#172b4d;-webkit-text-stroke:0.78px #172b4d;white-space:pre"><span style="margin-right:-0.800px">71.30%</span></div>
<div id="sum6" style="position:absolute;left:1447.50px;top:879px;width:600px;text-align:center;font:normal 31px/31px 'Liberation Sans';letter-spacing:2.067px;color:#172b4d;-webkit-text-stroke:1.05px #172b4d;white-space:pre"><span style="margin-right:-2.067px">28.5</span></div>
<div id="d6_1" style="position:absolute;left:1688.45px;top:881px;width:600px;text-align:center;font:normal 28px/28px 'Liberation Sans';letter-spacing:0.000px;color:#172b4d;-webkit-text-stroke:0.50px #172b4d;white-space:pre"><span style="margin-right:-0.000px">6</span></div>
<div id="d6_2" style="position:absolute;left:1798.75px;top:881px;width:600px;text-align:center;font:normal 28px/28px 'Liberation Sans';letter-spacing:0.000px;color:#172b4d;-webkit-text-stroke:0.50px #172b4d;white-space:pre"><span style="margin-right:-0.000px">12</span></div>
<div id="d6_3" style="position:absolute;left:1910.05px;top:881px;width:600px;text-align:center;font:normal 28px/28px 'Liberation Sans';letter-spacing:0.000px;color:#172b4d;-webkit-text-stroke:0.50px #172b4d;white-space:pre"><span style="margin-right:-0.000px">10.5</span></div>
<div id="item7" style="position:absolute;left:702.80px;top:958px;font:normal 30px/30px 'Liberation Sans';letter-spacing:-0.084px;color:#172b4d;white-space:pre">Training Completed modules 1-3 of React course</div>
<div id="sum7" style="position:absolute;left:1448.00px;top:958px;width:600px;text-align:center;font:normal 31px/31px 'Liberation Sans';letter-spacing:1.000px;color:#172b4d;-webkit-text-stroke:1.05px #172b4d;white-space:pre"><span style="margin-right:-1.000px">3.5</span></div>
<div id="d7_3" style="position:absolute;left:1910.05px;top:960px;width:600px;text-align:center;font:normal 28px/28px 'Liberation Sans';letter-spacing:0.000px;color:#172b4d;-webkit-text-stroke:0.50px #172b4d;white-space:pre"><span style="margin-right:-0.000px">3.5</span></div>
<div id="item8" style="position:absolute;left:702.80px;top:1037px;font:normal 30px/30px 'Liberation Sans';letter-spacing:0.009px;color:#172b4d;white-space:pre">Training Course setup and introduction modules</div>
<div id="sum8" style="position:absolute;left:1448.00px;top:1038px;width:600px;text-align:center;font:normal 31px/31px 'Liberation Sans';letter-spacing:0.000px;color:#172b4d;-webkit-text-stroke:1.05px #172b4d;white-space:pre"><span style="margin-right:-0.000px">4</span></div>
<div id="d8_2" style="position:absolute;left:1799.25px;top:1039px;width:600px;text-align:center;font:normal 28px/28px 'Liberation Sans';letter-spacing:0.000px;color:#172b4d;-webkit-text-stroke:0.50px #172b4d;white-space:pre"><span style="margin-right:-0.000px">4</span></div>
<div id="item9" style="position:absolute;left:673.60px;top:1117px;font:normal 30px/30px 'Liberation Sans';letter-spacing:0.000px;color:#172b4d;white-space:pre">MOB-203 Fix crash on Android 13 devices</div>
<div id="sum9" style="position:absolute;left:1448.00px;top:1117px;width:600px;text-align:center;font:normal 31px/31px 'Liberation Sans';letter-spacing:0.000px;color:#172b4d;-webkit-text-stroke:1.05px #172b4d;white-space:pre"><span style="margin-right:-0.000px">3</span></div>
<div id="d9_3" style="position:absolute;left:1910.55px;top:1118px;width:600px;text-align:center;font:normal 28px/28px 'Liberation Sans';letter-spacing:0.000px;color:#172b4d;-webkit-text-stroke:0.50px #172b4d;white-space:pre"><span style="margin-right:-0.000px">3</span></div>
<div id="item10" style="position:absolute;left:675.60px;top:1196px;font:normal 30px/30px 'Liberation Sans';letter-spacing:-0.050px;color:#172b4d;white-space:pre">WH-101 Implement user authentication flow</div>
<div id="sum10" style="position:absolute;left:1447.50px;top:1196px;width:600px;text-align:center;font:normal 31px/31px 'Liberation Sans';letter-spacing:1.800px;color:#172b4d;-webkit-text-stroke:1.05px #172b4d;white-space:pre"><span style="margin-right:-1.800px">16</span></div>
<div id="d10_1" style="position:absolute;left:1688.45px;top:1197px;width:600px;text-align:center;font:normal 28px/28px 'Liberation Sans';letter-spacing:0.000px;color:#172b4d;-webkit-text-stroke:0.50px #172b4d;white-space:pre"><span style="margin-right:-0.000px">6</span></div>
<div id="d10_2" style="position:absolute;left:1799.25px;top:1197px;width:600px;text-align:center;font:normal 28px/28px 'Liberation Sans';letter-spacing:0.000px;color:#172b4d;-webkit-text-stroke:0.50px #172b4d;white-space:pre"><span style="margin-right:-0.000px">8</span></div>
<div id="d10_3" style="position:absolute;left:1910.55px;top:1197px;width:600px;text-align:center;font:normal 28px/28px 'Liberation Sans';letter-spacing:0.000px;color:#172b4d;-webkit-text-stroke:0.50px #172b4d;white-space:pre"><span style="margin-right:-0.000px">2</span></div>
<div id="item11" style="position:absolute;left:675.60px;top:1275px;font:normal 30px/30px 'Liberation Sans';letter-spacing:0.057px;color:#172b4d;white-space:pre">WH-42 Worked on allocation dialog component</div>
<div id="sum11" style="position:absolute;left:1448.00px;top:1275px;width:600px;text-align:center;font:normal 31px/31px 'Liberation Sans';letter-spacing:0.000px;color:#172b4d;-webkit-text-stroke:1.05px #172b4d;white-space:pre"><span style="margin-right:-0.000px">2</span></div>
<div id="d11_3" style="position:absolute;left:1910.55px;top:1276px;width:600px;text-align:center;font:normal 28px/28px 'Liberation Sans';letter-spacing:0.000px;color:#172b4d;-webkit-text-stroke:0.50px #172b4d;white-space:pre"><span style="margin-right:-0.000px">2</span></div>
<div id="total" style="position:absolute;left:574.40px;top:1356px;font:normal 30px/30px 'Liberation Sans';letter-spacing:1.000px;color:#172b4d;-webkit-text-stroke:1.02px #172b4d;white-space:pre">Total</div>
<div id="sumtot" style="position:absolute;left:1448.00px;top:1355px;width:600px;text-align:center;font:normal 30px/30px 'Liberation Sans';letter-spacing:2.800px;color:#172b4d;-webkit-text-stroke:1.02px #172b4d;white-space:pre"><span style="margin-right:-2.800px">48.5</span></div>
<div id="dt_1" style="position:absolute;left:1688.45px;top:1356px;width:600px;text-align:center;font:normal 28px/28px 'Liberation Sans';letter-spacing:0.000px;color:#172b4d;-webkit-text-stroke:0.50px #172b4d;white-space:pre"><span style="margin-right:-0.000px">6</span></div>
<div id="dt_2" style="position:absolute;left:1799.25px;top:1356px;width:600px;text-align:center;font:normal 28px/28px 'Liberation Sans';letter-spacing:0.000px;color:#172b4d;-webkit-text-stroke:0.50px #172b4d;white-space:pre"><span style="margin-right:-0.000px">21</span></div>
<div id="dt_3" style="position:absolute;left:1910.05px;top:1356px;width:600px;text-align:center;font:normal 28px/28px 'Liberation Sans';letter-spacing:0.000px;color:#172b4d;-webkit-text-stroke:0.50px #172b4d;white-space:pre"><span style="margin-right:-0.000px">21.5</span></div>
</body></html>
